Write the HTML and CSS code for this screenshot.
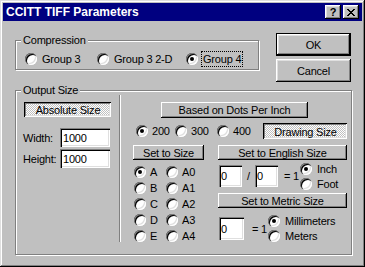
FILE: index.html
```html
<!DOCTYPE html>
<html lang="en">
<head>
    <meta charset="UTF-8">
    <meta name="viewport" content="width=device-width, initial-scale=1.0">
    <title>CCITT TIFF Parameters</title>
    <link rel="stylesheet" href="styles.css">
</head>
<body>
    <div class="window">
        <div class="titlebar">
            <span class="title">CCITT TIFF Parameters</span>
            <div class="caption-buttons">
                <span class="caption-btn help">?</span>
                <span class="caption-btn">
                    <svg width="8" height="7" viewBox="0 0 8 7" shape-rendering="crispEdges">
                        <path fill="#000" d="M0 0h2v1H0zM6 0h2v1H6zM1 1h2v1H1zM5 1h2v1H5zM2 2h4v1H2zM3 3h2v1H3zM2 4h4v1H2zM1 5h2v1H1zM5 5h2v1H5zM0 6h2v1H0zM6 6h2v1H6z"/>
                    </svg>
                </span>
            </div>
        </div>

        <div class="content">
            <div class="top-row">
                <fieldset class="group compression">
                    <legend>Compression</legend>
                    <div class="compression-row">
                        <label class="radio"><span class="radio-box"></span><span class="radio-label">Group 3</span></label>
                        <label class="radio"><span class="radio-box"></span><span class="radio-label">Group 3 2-D</span></label>
                        <label class="radio"><span class="radio-box checked"></span><span class="radio-label focused">Group 4</span></label>
                    </div>
                </fieldset>
                <div class="dialog-buttons">
                    <button class="btn dialog-btn default">OK</button>
                    <button class="btn dialog-btn">Cancel</button>
                </div>
            </div>

            <fieldset class="group output">
                <legend>Output Size</legend>
                <div class="output-grid">
                    <div class="absolute-col">
                        <button class="btn latched absolute-btn">Absolute Size</button>
                        <div class="size-fields">
                            <label>Width:</label><input class="edit" type="text" value="1000">
                            <label>Height:</label><input class="edit" type="text" value="1000">
                        </div>
                    </div>

                    <div class="separator"></div>

                    <div class="relative-col">
                        <button class="btn thin dpi-btn">Based on Dots Per Inch</button>
                        <div class="dpi-row">
                            <label class="radio"><span class="radio-box checked"></span>200</label>
                            <label class="radio"><span class="radio-box"></span>300</label>
                            <label class="radio"><span class="radio-box"></span>400</label>
                            <button class="btn latched drawing-btn">Drawing Size</button>
                        </div>

                        <div class="set-grid">
                            <div class="paper-col">
                                <button class="btn thin set-size-btn">Set to Size</button>
                                <div class="paper-grid">
                                    <label class="radio"><span class="radio-box checked"></span>A</label>
                                    <label class="radio"><span class="radio-box"></span>A0</label>
                                    <label class="radio"><span class="radio-box"></span>B</label>
                                    <label class="radio"><span class="radio-box"></span>A1</label>
                                    <label class="radio"><span class="radio-box"></span>C</label>
                                    <label class="radio"><span class="radio-box"></span>A2</label>
                                    <label class="radio"><span class="radio-box"></span>D</label>
                                    <label class="radio"><span class="radio-box"></span>A3</label>
                                    <label class="radio"><span class="radio-box"></span>E</label>
                                    <label class="radio"><span class="radio-box"></span>A4</label>
                                </div>
                            </div>

                            <div class="units-col">
                                <button class="btn thin unit-btn">Set to English Size</button>
                                <div class="ratio-row english">
                                    <input class="edit small" type="text" value="0">
                                    <span class="slash">/</span>
                                    <input class="edit small" type="text" value="0">
                                    <span class="equals">= 1</span>
                                    <div class="unit-stack">
                                        <label class="radio"><span class="radio-box checked"></span>Inch</label>
                                        <label class="radio"><span class="radio-box"></span>Foot</label>
                                    </div>
                                </div>
                                <button class="btn thin unit-btn metric-btn">Set to Metric Size</button>
                                <div class="ratio-row metric">
                                    <input class="edit small" type="text" value="0">
                                    <span class="equals">= 1</span>
                                    <div class="unit-stack">
                                        <label class="radio"><span class="radio-box checked"></span>Millimeters</label>
                                        <label class="radio"><span class="radio-box"></span>Meters</label>
                                    </div>
                                </div>
                            </div>
                        </div>
                    </div>
                </div>
            </fieldset>
        </div>
    </div>
</body>
</html>
```

FILE: styles.css
```css
* {
    box-sizing: border-box;
}

body {
    margin: 0;
    background-color: #c0c0c0;
    color: #000;
    font-family: "Liberation Sans", Arial, sans-serif;
    font-size: 11px;
    letter-spacing: -0.2px;
}

.window {
    width: 365px;
    height: 267px;
    padding: 3px;
    background-color: #c0c0c0;
    box-shadow: inset -1px -1px #000, inset 1px 1px #dfdfdf, inset -2px -2px #808080, inset 2px 2px #fff;
}

.titlebar {
    height: 18px;
    display: flex;
    align-items: center;
    justify-content: space-between;
    padding: 0 3px;
    background-color: #000080;
}

.title {
    color: #fff;
    font-size: 12px;
    font-weight: bold;
    letter-spacing: 0;
}

.caption-buttons {
    display: flex;
    gap: 2px;
}

.caption-btn {
    width: 16px;
    height: 14px;
    display: flex;
    align-items: center;
    justify-content: center;
    background-color: #c0c0c0;
    font-size: 11px;
    font-weight: bold;
    line-height: 1;
    box-shadow: inset -1px -1px #000, inset 1px 1px #fff, inset -2px -2px #808080, inset 2px 2px #dfdfdf;
}

.content {
    padding: 12px 0 0 12px;
}

.top-row {
    display: flex;
    align-items: flex-start;
}

/* etched group box */
.group {
    margin: 0;
    padding: 0 0 0 5px;
    min-width: 0;
    border: 1px solid #808080;
    box-shadow: inset 1px 1px #fff, 1px 1px #fff;
}

.group legend {
    padding: 0 2px;
    line-height: 13px;
    background-color: #c0c0c0;
}

.compression {
    width: 244px;
    margin-top: 1px;
}

.compression-row {
    display: grid;
    grid-template-columns: 72px 89px auto;
    align-items: center;
    padding: 4px 0 2px 4px;
}

.dialog-buttons {
    display: flex;
    flex-direction: column;
    gap: 3px;
    margin-left: 17px;
}

/* buttons */
.btn {
    display: flex;
    align-items: center;
    justify-content: center;
    padding: 0;
    border: 0;
    background-color: #c0c0c0;
    color: #000;
    font: inherit;
    letter-spacing: inherit;
    box-shadow: inset -1px -1px #000, inset 1px 1px #fff, inset -2px -2px #808080, inset 2px 2px #dfdfdf;
}

.btn.thin {
    box-shadow: inset -1px -1px #000, inset 1px 1px #fff, inset -2px -2px #808080;
}

.btn.latched {
    padding: 1px 0 0 1px;
    background-color: #fff;
    background-image: conic-gradient(#fff 25%, #c0c0c0 0 50%, #fff 0 75%, #c0c0c0 0);
    background-size: 2px 2px;
    box-shadow: inset 1px 1px #000, inset -1px -1px #fff, inset 2px 2px #808080, inset -2px -2px #dfdfdf;
}

.dialog-btn {
    width: 75px;
    height: 23px;
}

.dialog-btn.default {
    border: 1px solid #000;
}

/* radio buttons */
.radio {
    display: flex;
    align-items: center;
    gap: 4px;
    white-space: nowrap;
}

.radio-box {
    width: 12px;
    height: 12px;
    flex: none;
    display: grid;
    place-items: center;
    border-radius: 50%;
    background-color: #fff;
    box-shadow: inset 1px 1px #808080, inset 2px 2px #000, inset -1px -1px #fff, inset -2px -2px #dfdfdf;
}

.radio-box.checked::after {
    content: '';
    width: 4px;
    height: 4px;
    border-radius: 50%;
    background-color: #000;
}

.radio-label {
    height: 16px;
    padding: 0 1px;
    margin-left: -1px;
    display: flex;
    align-items: center;
    border: 1px dotted transparent;
}

.radio-label.focused {
    border-color: #000;
}

/* edit fields */
.edit {
    height: 19px;
    padding: 0 3px;
    border: 0;
    background-color: #fff;
    color: #000;
    font: inherit;
    letter-spacing: inherit;
    box-shadow: inset 1px 1px #808080, inset 2px 2px #000, inset -1px -1px #fff, inset -2px -2px #dfdfdf;
}

.edit.small {
    width: 23px;
    height: 22px;
    padding: 0 2px;
}

/* output size */
.output {
    width: 337px;
    margin-top: 2px;
    padding-bottom: 10px;
}

.output-grid {
    display: grid;
    grid-template-columns: 98px 2px 1fr;
    align-items: start;
}

.absolute-col {
    padding: 5px 0 0 3px;
}

.absolute-btn {
    width: 87px;
    height: 15px;
}

.size-fields {
    display: grid;
    grid-template-columns: 37px 50px;
    align-items: center;
    row-gap: 2px;
    margin: 11px 0 0 -1px;
}

.size-fields .edit {
    width: 50px;
}

.separator {
    height: 147px;
    margin-top: -2px;
    border-left: 1px solid #808080;
    border-right: 1px solid #fff;
}

.relative-col {
    padding-top: 5px;
}

.dpi-btn {
    width: 147px;
    height: 16px;
    margin-left: 40px;
}

.dpi-row {
    display: grid;
    grid-template-columns: 39px 42px 46px 84px;
    align-items: center;
    height: 16px;
    margin-top: 5px;
    padding-left: 15px;
}

.drawing-btn {
    height: 16px;
}

.set-grid {
    display: grid;
    grid-template-columns: 97px 129px;
    align-items: start;
    margin-top: 6px;
}

.set-size-btn {
    width: 71px;
    height: 15px;
    margin-left: 12px;
}

.paper-grid {
    display: grid;
    grid-template-columns: 32px auto;
    grid-auto-rows: 16px;
    align-items: center;
    margin: 4px 0 0 13px;
}

.unit-btn {
    width: 129px;
    height: 15px;
}

.ratio-row {
    display: flex;
    align-items: center;
    margin-top: 5px;
    padding-left: 1px;
}

.ratio-row.english {
    height: 22px;
}

.slash {
    width: 13px;
    text-align: center;
}

.equals {
    width: 22px;
    padding-right: 1px;
    text-align: right;
}

.unit-stack {
    display: flex;
    flex-direction: column;
}

.unit-stack .radio {
    height: 15px;
    gap: 5px;
}

.metric-btn {
    margin-top: 6px;
}

.ratio-row.metric {
    height: 23px;
    margin-top: 9px;
}

.metric .edit.small {
    width: 25px;
    height: 23px;
}

.metric .equals {
    width: 24px;
}
```
